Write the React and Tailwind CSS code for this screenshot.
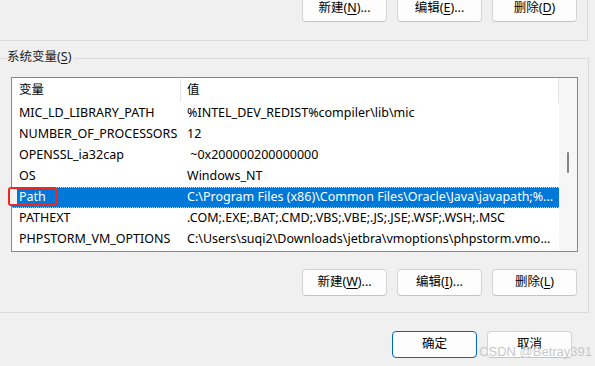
const ui = { fontFamily: '"Noto Sans", "Noto Sans CJK SC", sans-serif' };

const rows = [
  ["MIC_LD_LIBRARY_PATH", "%INTEL_DEV_REDIST%compiler\\lib\\mic"],
  ["NUMBER_OF_PROCESSORS", "12"],
  ["OPENSSL_ia32cap", "\u00a0~0x200000200000000"],
  ["OS", "Windows_NT"],
  ["Path", "C:\\Program Files (x86)\\Common Files\\Oracle\\Java\\javapath;%..."],
  ["PATHEXT", ".COM;.EXE;.BAT;.CMD;.VBS;.VBE;.JS;.JSE;.WSF;.WSH;.MSC"],
  ["PHPSTORM_VM_OPTIONS", "C:\\Users\\suqi2\\Downloads\\jetbra\\vmoptions\\phpstorm.vmo..."],
];

function Btn({ label, hot, tail, primary }) {
  return (
    <button
      className={`w-[85px] h-[27px] rounded-[4px] bg-[#fdfdfd] text-[12.5px] text-black flex items-center justify-center ${
        primary ? "border-[1.5px] border-[#0067c0]" : "border border-[#d3d3d3] border-b-[#c4c4c4]"
      }`}
    >
      {label}
      {hot && (
        <>
          (<span className="underline underline-offset-2">{hot}</span>){tail}
        </>
      )}
    </button>
  );
}

function Row({ name, value, selected }) {
  return (
    <div
      className={`flex h-[21px] items-center whitespace-nowrap ${
        selected ? "bg-[#0078d7] text-white border-y border-dotted border-[#f3c68c]" : "text-black"
      }`}
    >
      <div className="w-[169px] pl-[7px] overflow-hidden">{name}</div>
      <div className="flex-1 pl-[6px] overflow-hidden">{value}</div>
    </div>
  );
}

export default function App() {
  return (
    <div className="relative w-[595px] h-[366px] bg-[#f0f0f0] overflow-hidden text-[12.5px]" style={ui}>
      {/* user vars group (cut off) */}
      <div className="w-[588px] h-[41px] border-r border-b border-[#dadada] flex justify-end pr-[10px]">
        <div className="-mt-[5px] flex gap-[10px]">
          <Btn label="新建" hot="N" tail="..." />
          <Btn label="编辑" hot="E" tail="..." />
          <Btn label="删除" hot="D" />
        </div>
      </div>

      {/* system vars group */}
      <div className="relative mt-[17px] w-[589px] border-t border-r border-b border-[#dadada] pt-[18px] pb-[16px]">
        <div className="absolute left-[7px] -top-[11px] bg-[#f0f0f0] pr-[3px] text-[12.5px] text-[#1a1a1a]">
          系统变量(<span className="underline underline-offset-2">S</span>)
        </div>

        <div className="ml-[11px] w-[567px] h-[175px] border border-[#828790] bg-white flex">
          <div className="w-[547px]">
            <div className="flex h-[25px] items-center text-black">
              <div className="w-[168px] pl-[7px]">变量</div>
              <div className="w-px h-[23px] bg-[#e5e5e5]" />
              <div className="flex-1 pl-[6px]">值</div>
              <div className="w-px h-[25px] bg-[#e5e5e5]" />
            </div>
            {rows.map(([n, v]) => (
              <Row key={n} name={n} value={v} selected={n === "Path"} />
            ))}
          </div>
          <div className="flex-1 bg-[#f6f6f6] relative">
            <div className="absolute left-[8px] top-[74px] w-[2px] h-[21px] rounded-full bg-[#858585]" />
          </div>
        </div>

        <div className="mt-[17px] flex justify-end gap-[10px] pr-[11px]">
          <Btn label="新建" hot="W" tail="..." />
          <Btn label="编辑" hot="I" tail="..." />
          <Btn label="删除" hot="L" />
        </div>
      </div>

      <div className="mt-[18px] flex justify-end gap-[10px] pr-[23px]">
        <Btn label="确定" primary />
        <Btn label="取消" />
      </div>

      {/* annotation box around Path */}
      <div className="absolute left-[8px] top-[187px] w-[49px] h-[19px] border-2 border-[#f0261f] rounded-[3px]">
        <div className="w-[7px] h-full bg-[#f4f4f4]" />
      </div>

      <div
        className="absolute right-[3px] bottom-[5px] text-[13px] text-[#c9c9c9]"
        style={{ fontFamily: '"Liberation Sans", Arial, sans-serif' }}
      >
        CSDN @Betray391
      </div>
    </div>
  );
}
